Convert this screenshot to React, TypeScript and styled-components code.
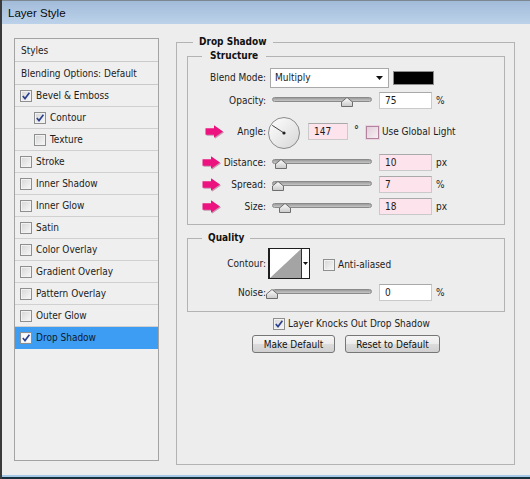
import React from 'react';
import styled, { createGlobalStyle } from 'styled-components';

const FONT = `"DejaVu Sans Condensed", "DejaVu Sans", "Liberation Sans", sans-serif`;

const GlobalStyle = createGlobalStyle`
  html, body { margin: 0; padding: 0; }
  body { background: #16313d; width: 530px; height: 479px; overflow: hidden; }
  #root { width: 530px; height: 479px; }
`;

const Window = styled.div`
  box-sizing: border-box;
  width: 530px;
  height: 479px;
  display: flex;
  flex-direction: column;
  background: #ededed;
  border-left: 2px solid #3a3a3a;
  font-family: ${FONT};
  font-size: 10px;
  color: #1c1c1c;
`;

const TitleBar = styled.div`
  box-sizing: border-box;
  height: 24px;
  flex-shrink: 0;
  display: flex;
  align-items: center;
  padding-left: 6px;
  border-top: 1px solid #7d8794;
  background: linear-gradient(#a2bbd9, #bcd2ea);
  font-family: "Liberation Sans", Arial, sans-serif;
  font-size: 11.5px;
  color: #0a0a0a;
`;

const Body = styled.div`
  flex: 1;
  display: flex;
  align-items: flex-start;
  padding: 14px 0 0 12px;
`;

const BottomEdge = styled.div`
  height: 4px;
  flex-shrink: 0;
  box-sizing: border-box;
  border-top: 2px solid #a6c9e8;
  background: #16313d;
`;

/* ---------- left list ---------- */

const StyleList = styled.div`
  box-sizing: border-box;
  width: 145px;
  height: 423px;
  flex-shrink: 0;
  display: flex;
  flex-direction: column;
  border: 1px solid #a3a3a3;
  background: #efefef;
`;

const ListHeader = styled.div`
  box-sizing: border-box;
  height: 23px;
  display: flex;
  align-items: center;
  padding-left: 6px;
  border-bottom: 1px solid #cacaca;
`;

const ListItem = styled.div<{ $indent?: boolean; $selected?: boolean }>`
  box-sizing: border-box;
  height: 22px;
  display: flex;
  align-items: center;
  gap: 4px;
  padding-left: ${(p) => (p.$indent ? 19 : 5)}px;
  border-bottom: 1px solid ${(p) => (p.$selected ? '#3d9df3' : '#d0d0d0')};
  background: ${(p) => (p.$selected ? '#3d9df3' : 'transparent')};
  color: ${(p) => (p.$selected ? '#0e1a2c' : '#1c1c1c')};
`;

const CheckBoxBox = styled.span<{ $white?: boolean }>`
  box-sizing: border-box;
  width: 12px;
  height: 12px;
  flex-shrink: 0;
  display: inline-flex;
  align-items: center;
  justify-content: center;
  border: 1px solid #8e8f8f;
  background: ${(p) => (p.$white ? '#fbfbfb' : 'linear-gradient(135deg, #d6d6d6, #f8f8f8)')};
  box-shadow: inset 0 0 0 1px #f2f2f2;
`;

const CheckBox: React.FC<{ checked?: boolean; white?: boolean }> = ({ checked, white }) => (
  <CheckBoxBox $white={white}>
    {checked && (
      <svg width="10" height="10" viewBox="0 0 10 10">
        <path d="M1.8 5 L4 7.6 L8.4 1.8" fill="none" stroke="#2a3f8e" strokeWidth="1.6" />
      </svg>
    )}
  </CheckBoxBox>
);

/* ---------- right panel ---------- */

const Group = styled.fieldset`
  box-sizing: border-box;
  margin: -2px 0 0 17px;
  width: 339px;
  height: 429px;
  padding: 0 9px 0 10px;
  border: 1px solid #b3b3b3;
  min-width: 0;
  display: flex;
  flex-direction: column;
`;

const SubGroup = styled.fieldset<{ $gap: number; $pt: number; $pb: number }>`
  box-sizing: border-box;
  margin: ${(p) => p.$gap}px 0 0;
  padding: ${(p) => p.$pt}px 0 ${(p) => p.$pb}px;
  border: 1px solid #b3b3b3;
  min-width: 0;
  display: flex;
  flex-direction: column;
`;

const Legend = styled.legend<{ $ml: number; $pad: number }>`
  font-weight: bold;
  line-height: 12px;
  font-size: 10px;
  margin-left: ${(p) => p.$ml}px;
  padding: 0 ${(p) => p.$pad}px;
  color: #111;
`;

const Row = styled.div<{ $h: number }>`
  height: ${(p) => p.$h}px;
  display: flex;
  align-items: center;
`;

const LabelCell = styled.div`
  box-sizing: border-box;
  width: 82px;
  flex-shrink: 0;
  padding-right: 4px;
  display: flex;
  align-items: center;
  justify-content: flex-end;
`;

const ArrowMark = styled.svg<{ $x: number }>`
  margin-left: ${(p) => p.$x}px;
  margin-right: auto;
  flex-shrink: 0;
  filter: drop-shadow(1px 1px 0.6px rgba(120, 0, 60, 0.35));
`;

const PinkArrow: React.FC<{ x: number }> = ({ x }) => (
  <ArrowMark $x={x} width="19" height="13" viewBox="0 0 19 13">
    <path d="M0.5 3.2 H9 V0.3 L18 6.5 L9 12.7 V9.8 H0.5 Z" fill="#ec1380" />
  </ArrowMark>
);

const Select = styled.div`
  box-sizing: border-box;
  width: 119px;
  height: 20px;
  display: flex;
  align-items: center;
  padding: 0 5px 0 4px;
  border: 1px solid #a9a9a9;
  background: #fff;
`;

const Caret = styled.svg`
  margin-left: auto;
`;

const Swatch = styled.div`
  box-sizing: border-box;
  width: 41px;
  height: 14px;
  margin-left: 4px;
  background: #000;
  border: 1px solid #8c8c8c;
`;

const SliderWrap = styled.div`
  position: relative;
  width: 104px;
  height: 14px;
  flex-shrink: 0;
`;

const Track = styled.div`
  box-sizing: border-box;
  margin: 4px 2px 0;
  height: 5px;
  border-radius: 3px;
  border: 1px solid #8a8a8a;
  background: linear-gradient(#9c9c9c, #c6c6c6);
`;

const ThumbSvg = styled.svg`
  position: absolute;
  top: 4px;
`;

const Slider: React.FC<{ value: number }> = ({ value }) => (
  <SliderWrap>
    <Track />
    <ThumbSvg width="12" height="10" viewBox="0 0 12 10" style={{ left: 2 + (value / 100) * 100 - 6 }}>
      <defs>
        <linearGradient id="thumbg" x1="0" y1="0" x2="0" y2="1">
          <stop offset="0" stopColor="#ffffff" />
          <stop offset="1" stopColor="#c9c9c9" />
        </linearGradient>
      </defs>
      <path d="M6 0.5 L11.5 5 V9.5 H0.5 V5 Z" fill="url(#thumbg)" stroke="#6e6e6e" />
    </ThumbSvg>
  </SliderWrap>
);

const Field = styled.div<{ $pink?: boolean; $w?: number; $ml?: number }>`
  box-sizing: border-box;
  width: ${(p) => p.$w ?? 53}px;
  height: 17px;
  margin-left: ${(p) => p.$ml ?? 5}px;
  flex-shrink: 0;
  display: flex;
  align-items: center;
  padding-left: 5px;
  border: 1px solid #cacaca;
  border-top-color: #a9a9a9;
  background: ${(p) => (p.$pink ? '#fce3ec' : '#ffffff')};
`;

const Unit = styled.span`
  margin-left: 4px;
`;

const Dial = styled.svg`
  margin-left: -3px;
  margin-top: 4px;
  flex-shrink: 0;
`;

const Degree = styled.span`
  margin-left: 6px;
  margin-top: -3px;
  font-size: 11px;
  font-weight: bold;
  color: #333;
`;

const GlobalBox = styled.span`
  box-sizing: border-box;
  width: 13px;
  height: 13px;
  margin-left: 7px;
  margin-top: 3px;
  flex-shrink: 0;
  border: 1px solid #b1839f;
  box-shadow: 0 0 0 1px #ecd3e0;
  background: linear-gradient(135deg, #e2cdd9, #f7eff3);
`;

const CheckLabel = styled.span`
  margin-left: 3px;
  white-space: nowrap;
`;

const ContourBox = styled.div`
  box-sizing: border-box;
  margin-left: -2px;
  width: 42px;
  height: 31px;
  display: flex;
  border: 1px solid #1e1e1e;
  border-left-width: 2px;
  background: #fff;
  flex-shrink: 0;
`;

const ContourCaret = styled.div`
  flex: 1;
  display: flex;
  align-items: center;
  justify-content: center;
  border-left: 1px solid #333;
`;

const AntiBox = styled.div`
  display: flex;
  align-items: center;
  margin-left: 13px;
  margin-top: 3px;
`;

const KnockRow = styled.div`
  height: 19px;
  margin-top: 2px;
  display: flex;
  align-items: center;
  padding-left: 86px;
`;

const ButtonRow = styled.div`
  height: 18px;
  margin-top: 2px;
  display: flex;
  justify-content: center;
  gap: 10px;
`;

const Button = styled.button<{ $w: number }>`
  box-sizing: border-box;
  width: ${(p) => p.$w}px;
  height: 18px;
  padding: 0;
  border: 1px solid #767676;
  border-radius: 3px;
  background: linear-gradient(#f5f5f5 0%, #ececec 48%, #dcdcdc 52%, #d0d0d0 100%);
  font-family: ${FONT};
  font-size: 10px;
  color: #111;
`;

const styleItems: { name: string; checked?: boolean; indent?: boolean; selected?: boolean }[] = [
  { name: 'Bevel & Emboss', checked: true },
  { name: 'Contour', checked: true, indent: true },
  { name: 'Texture', indent: true },
  { name: 'Stroke' },
  { name: 'Inner Shadow' },
  { name: 'Inner Glow' },
  { name: 'Satin' },
  { name: 'Color Overlay' },
  { name: 'Gradient Overlay' },
  { name: 'Pattern Overlay' },
  { name: 'Outer Glow' },
  { name: 'Drop Shadow', checked: true, selected: true },
];

const angle = 147;
const rad = (angle * Math.PI) / 180;

export default function App() {
  return (
    <>
      <GlobalStyle />
      <Window>
        <TitleBar>Layer Style</TitleBar>
        <Body>
          <StyleList>
            <ListHeader>Styles</ListHeader>
            <ListHeader>Blending Options: Default</ListHeader>
            {styleItems.map((it) => (
              <ListItem key={it.name} $indent={it.indent} $selected={it.selected}>
                <CheckBox checked={it.checked} white={it.selected} />
                <span>{it.name}</span>
              </ListItem>
            ))}
          </StyleList>

          <Group>
            <Legend $ml={6} $pad={6}>Drop Shadow</Legend>

            <SubGroup $gap={2} $pt={4} $pb={7}>
              <Legend $ml={14} $pad={8}>Structure</Legend>
              <Row $h={23}>
                <LabelCell>Blend Mode:</LabelCell>
                <Select>
                  <span>Multiply</span>
                  <Caret width="7" height="4" viewBox="0 0 7 4">
                    <path d="M0 0 H7 L3.5 4 Z" fill="#111" />
                  </Caret>
                </Select>
                <Swatch />
              </Row>
              <Row $h={22}>
                <LabelCell>Opacity:</LabelCell>
                <Slider value={75} />
                <Field>75</Field>
                <Unit>%</Unit>
              </Row>
              <Row $h={40}>
                <LabelCell>
                  <PinkArrow x={17} />
                  Angle:
                </LabelCell>
                <Dial width="34" height="34" viewBox="0 0 34 34">
                  <defs>
                    <linearGradient id="dialg" x1="0" y1="0" x2="1" y2="1">
                      <stop offset="0" stopColor="#ffffff" />
                      <stop offset="1" stopColor="#d6d6d6" />
                    </linearGradient>
                  </defs>
                  <circle cx="17" cy="17" r="15.5" fill="url(#dialg)" stroke="#8a8a8a" />
                  <line
                    x1="17"
                    y1="17"
                    x2={17 + Math.cos(rad) * 14}
                    y2={17 - Math.sin(rad) * 14}
                    stroke="#444"
                    strokeWidth="1"
                  />
                  <circle cx="17" cy="17" r="1.6" fill="#222" />
                </Dial>
                <Field $pink $w={40} $ml={7}>147</Field>
                <Degree>°</Degree>
                <GlobalBox />
                <CheckLabel>Use Global Light</CheckLabel>
              </Row>
              <Row $h={22}>
                <LabelCell>
                  <PinkArrow x={14} />
                  Distance:
                </LabelCell>
                <Slider value={9} />
                <Field $pink>10</Field>
                <Unit>px</Unit>
              </Row>
              <Row $h={22}>
                <LabelCell>
                  <PinkArrow x={14} />
                  Spread:
                </LabelCell>
                <Slider value={6} />
                <Field $pink>7</Field>
                <Unit>%</Unit>
              </Row>
              <Row $h={22}>
                <LabelCell>
                  <PinkArrow x={14} />
                  Size:
                </LabelCell>
                <Slider value={13} />
                <Field $pink>18</Field>
                <Unit>px</Unit>
              </Row>
            </SubGroup>

            <SubGroup $gap={7} $pt={3} $pb={6}>
              <Legend $ml={14} $pad={6}>Quality</Legend>
              <Row $h={32}>
                <LabelCell>Contour:</LabelCell>
                <ContourBox>
                  <svg width="31" height="29" viewBox="0 0 31 29">
                    <path d="M0 29 L31 0 V29 Z" fill="#a4a4a4" />
                  </svg>
                  <ContourCaret>
                    <svg width="5" height="3" viewBox="0 0 5 3">
                      <path d="M0 0 H5 L2.5 3 Z" fill="#111" />
                    </svg>
                  </ContourCaret>
                </ContourBox>
                <AntiBox>
                  <CheckBox />
                  <CheckLabel>Anti-aliased</CheckLabel>
                </AntiBox>
              </Row>
              <Row $h={26}>
                <LabelCell>Noise:</LabelCell>
                <Slider value={0} />
                <Field>0</Field>
                <Unit>%</Unit>
              </Row>
            </SubGroup>

            <KnockRow>
              <CheckBox checked />
              <CheckLabel>Layer Knocks Out Drop Shadow</CheckLabel>
            </KnockRow>
            <ButtonRow>
              <Button $w={83}>Make Default</Button>
              <Button $w={95}>Reset to Default</Button>
            </ButtonRow>
          </Group>
        </Body>
        <BottomEdge />
      </Window>
    </>
  );
}
